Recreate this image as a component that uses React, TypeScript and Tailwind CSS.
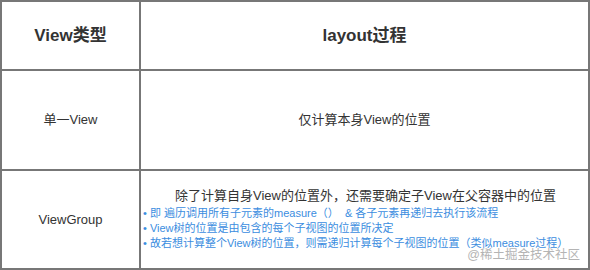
const rows = [
  { kind: "单一View", detail: "仅计算本身View的位置" },
];

const notes = [
  "即 遍历调用所有子元素的measure（）  & 各子元素再递归去执行该流程",
  "View树的位置是由包含的每个子视图的位置所决定",
  "故若想计算整个View树的位置，则需递归计算每个子视图的位置（类似measure过程）",
];

export default function App() {
  return (
    <div
      className="relative w-[590px] h-[270px] bg-white border-2 border-[#777] text-[#333] overflow-hidden"
      style={{ fontFamily: '"Liberation Sans", "Noto Sans CJK SC", sans-serif' }}
    >
      <div className="grid grid-cols-[139px_1fr] grid-rows-[69px_100px_97px] h-full">
        {/* header */}
        <div className="flex items-center justify-center border-r-2 border-b-2 border-[#777] text-[17px] font-bold">
          View类型
        </div>
        <div className="flex items-center justify-center border-b-2 border-[#777] text-[17px] font-bold">
          layout过程
        </div>

        {rows.map((r) => (
          <>
            <div key={r.kind} className="flex items-center justify-center border-r-2 border-b-2 border-[#777] text-[13px]">
              {r.kind}
            </div>
            <div className="flex items-center justify-center border-b-2 border-[#777] text-[13px]">
              {r.detail}
            </div>
          </>
        ))}

        <div className="flex items-center justify-center border-r-2 border-[#777] text-[13px]">
          ViewGroup
        </div>
        <div className="flex flex-col pt-[15px] pl-[2px]">
          <p className="text-[13px] leading-[20px] text-center">
            除了计算自身View的位置外，还需要确定子View在父容器中的位置
          </p>
          {notes.map((n) => (
            <p key={n} className="text-[11px] leading-[15px] text-[#3b8de0] whitespace-pre">
              • {n}
            </p>
          ))}
        </div>
      </div>

      {/* watermark */}
      <span className="absolute right-[8px] bottom-[3px] text-[12.5px] text-[#b4b4b4]">
        @稀土掘金技术社区
      </span>
    </div>
  );
}
